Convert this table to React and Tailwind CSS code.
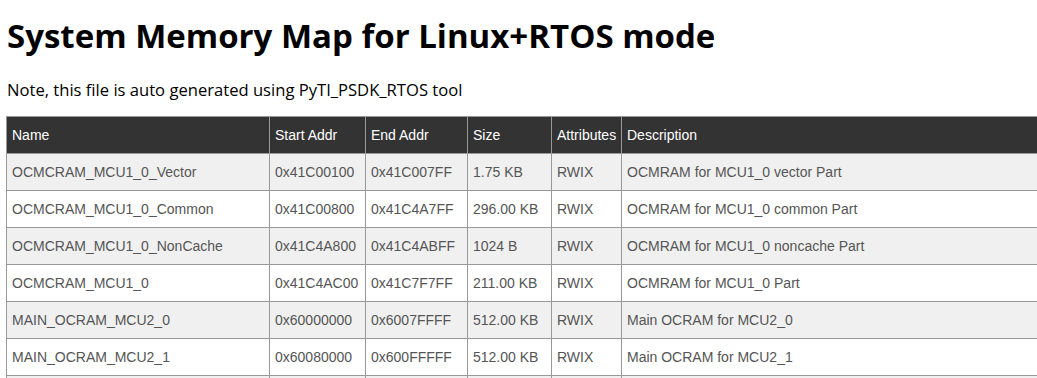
import React from 'react';

const rows = [
  ['OCMCRAM_MCU1_0_Vector', '0x41C00100', '0x41C007FF', '1.75 KB', 'RWIX', 'OCMRAM for MCU1_0 vector Part'],
  ['OCMCRAM_MCU1_0_Common', '0x41C00800', '0x41C4A7FF', '296.00 KB', 'RWIX', 'OCMRAM for MCU1_0 common Part'],
  ['OCMCRAM_MCU1_0_NonCache', '0x41C4A800', '0x41C4ABFF', '1024 B', 'RWIX', 'OCMRAM for MCU1_0 noncache Part'],
  ['OCMCRAM_MCU1_0', '0x41C4AC00', '0x41C7F7FF', '211.00 KB', 'RWIX', 'OCMRAM for MCU1_0 Part'],
  ['MAIN_OCRAM_MCU2_0', '0x60000000', '0x6007FFFF', '512.00 KB', 'RWIX', 'Main OCRAM for MCU2_0'],
  ['MAIN_OCRAM_MCU2_1', '0x60080000', '0x600FFFFF', '512.00 KB', 'RWIX', 'Main OCRAM for MCU2_1'],
];

const headers = ['Name', 'Start Addr', 'End Addr', 'Size', 'Attributes', 'Description'];
const widths = ['w-[263px]', 'w-[96px]', 'w-[102px]', 'w-[84px]', 'w-[70px]', 'w-[600px]'];

export default function App() {
  return (
    <div className="h-[378px] w-[1037px] overflow-hidden bg-white px-[6px] text-black">
      <h1 className="pt-[17px] pl-[1px] text-[33px] font-bold leading-[38px]" style={{ fontFamily: '"Open Sans", sans-serif' }}>
        System Memory Map for Linux+RTOS mode
      </h1>
      <p className="mt-[23px] pl-[1px] text-[16.6px] leading-[24px]" style={{ fontFamily: '"Open Sans", sans-serif' }}>
        Note, this file is auto generated using PyTI_PSDK_RTOS tool
      </p>
      <table className="mt-[14px] w-[1215px] table-fixed border-collapse text-[14px] leading-[20px] text-[#555]" style={{ fontFamily: '"Liberation Sans", Arial, sans-serif' }}>
        <thead>
          <tr className="bg-[#333] text-white">
            {headers.map((h, i) => (
              <th key={h} className={`${widths[i]} border border-[#999] px-[5px] py-[8px] text-left font-normal`}>
                {h}
              </th>
            ))}
          </tr>
        </thead>
        <tbody>
          {rows.map((r, ri) => (
            <tr key={r[0]} className={ri % 2 === 0 ? 'bg-[#f0f0f0]' : 'bg-white'}>
              {r.map((c, ci) => (
                <td key={ci} className="border border-[#999] px-[5px] py-[8px]">
                  {c}
                </td>
              ))}
            </tr>
          ))}
          <tr className="bg-[#f0f0f0]">
            {headers.map((h) => (
              <td key={h} className="h-[37px] border border-[#999]" />
            ))}
          </tr>
        </tbody>
      </table>
    </div>
  );
}
